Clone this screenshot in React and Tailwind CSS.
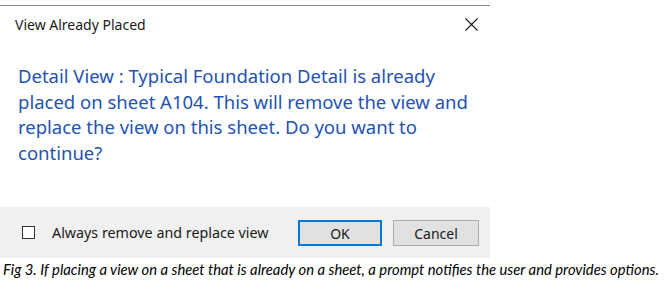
import React, { useState } from 'react';

const App = () => {
  const [alwaysReplace, setAlwaysReplace] = useState(false);

  return (
    <div className="w-[668px] h-[283px] bg-white overflow-hidden" style={{ fontFamily: '"Noto Sans", "Open Sans", sans-serif' }}>
      {/* Dialog */}
      <div className="w-[490px] pt-[5px]">
        <div className="h-px bg-[#8c8c8c]" />
        <div className="flex items-center justify-between h-[37px] pl-[15px] pr-[12px]">
          <span className="text-[14px] text-[#1a1a1a]">View Already Placed</span>
          <button className="w-[14px] h-[14px] flex items-center justify-center text-[#1a1a1a]">
            <svg width="13" height="13" viewBox="0 0 13 13" fill="none" stroke="currentColor" strokeWidth="1.1">
              <path d="M0.5 0.5 L12.5 12.5 M12.5 0.5 L0.5 12.5" />
            </svg>
          </button>
        </div>

        {/* Main instruction */}
        <div className="h-[164px] pl-[18px] pr-[14px] pt-[20px]">
          <p className="text-[18.5px] leading-[25.5px] text-[#2453b0]">
            Detail View : Typical Foundation Detail is already placed on sheet A104. This will remove the view and replace the view on this sheet. Do you want to continue?
          </p>
        </div>

        {/* Footer */}
        <div className="h-[51px] bg-[#f0f0f0] flex items-center pl-[22px] pr-[11px]">
          <label className="flex items-center gap-[17px] cursor-pointer">
            <input
              type="checkbox"
              checked={alwaysReplace}
              onChange={(e) => setAlwaysReplace(e.target.checked)}
              className="appearance-none w-[13px] h-[13px] border border-[#333333] bg-white"
            />
            <span className="text-[14.3px] text-[#1a1a1a]">Always remove and replace view</span>
          </label>
          <div className="ml-auto flex gap-[11px] mt-[1px]">
            <button className="w-[84px] h-[26px] border-2 border-[#0078d7] bg-[#e1e1e1] text-[14px] text-[#1a1a1a]">OK</button>
            <button className="w-[86px] h-[26px] border border-[#adadad] bg-[#e1e1e1] text-[14px] text-[#1a1a1a]">Cancel</button>
          </div>
        </div>
      </div>

      {/* Caption */}
      <p
        className="pl-[3px] pt-[2px] text-[14.8px] leading-[18px] italic text-black whitespace-nowrap"
        style={{ fontFamily: 'Lato, "Open Sans", sans-serif' }}
      >
        Fig 3. If placing a view on a sheet that is already on a sheet, a prompt notifies the user and provides options.
      </p>
    </div>
  );
};

export default App;
